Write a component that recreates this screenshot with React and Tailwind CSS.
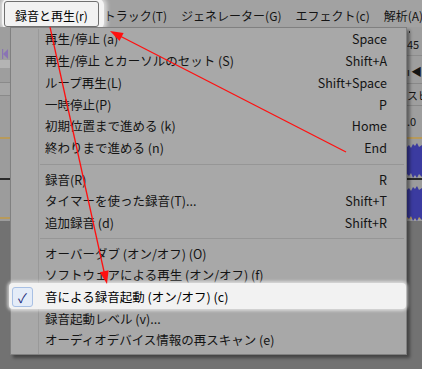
import React from "react";

const g1 = [
  ["再生/停止 (a)", "Space"],
  ["再生/停止 とカーソルのセット (S)", "Shift+A"],
  ["ループ再生(L)", "Shift+Space"],
  ["一時停止(P)", "P"],
  ["初期位置まで進める (k)", "Home"],
  ["終わりまで進める (n)", "End"],
];
const g2 = [
  ["録音(R)", "R"],
  ["タイマーを使った録音(T)...", "Shift+T"],
  ["追加録音 (d)", "Shift+R"],
];
const g3 = [
  ["オーバーダブ (オン/オフ) (O)", ""],
  ["ソフトウェアによる再生 (オン/オフ) (f)", ""],
  ["音による録音起動 (オン/オフ) (c)", "", true],
  ["録音起動レベル (v)...", ""],
  ["オーディオデバイス情報の再スキャン (e)", ""],
];

function Row({ label, sc, checked }) {
  if (checked) {
    return (
      <div className="relative flex h-[21.7px] items-center">
        <div className="absolute -left-[2px] right-0 -top-[4px] -bottom-[1px] rounded-[4px] bg-[#f2f2f2] shadow-[0_0_3px_2px_rgba(255,255,255,0.55)]" />
        <div className="relative z-10 flex h-full w-[28px] items-center pl-[1px]">
          <div className="flex h-[20px] w-[21px] items-center justify-center rounded-[3px] border border-[#a8c0e4] bg-[#e4ecf8] text-[13px] leading-none text-[#1b2a78]">
            ✓
          </div>
        </div>
        <div className="relative z-10 flex-1 whitespace-nowrap pl-[6px] text-black">{label}</div>
      </div>
    );
  }
  return (
    <div className="flex h-[21.7px] items-center">
      <div className="h-full w-[28px] border-r border-[#999999]" />
      <div className="flex-1 whitespace-nowrap pl-[6px]">{label}</div>
      <div className="whitespace-nowrap pr-[19px]">{sc}</div>
    </div>
  );
}

function Sep({ h }) {
  return (
    <div className={`flex ${h}`}>
      <div className="h-full w-[28px] border-r border-[#999999]" />
      <div className="flex flex-1 items-center pl-[1px] pr-[2px]">
        <div className="h-px w-full bg-[#969696]" />
      </div>
    </div>
  );
}

function Wave() {
  return (
    <svg width="15" height="36" viewBox="0 0 15 36">
      <path
        d="M0 4 L2 2 L4 5 L6 1 L8 3 L10 0 L12 4 L15 2 L15 34 L12 31 L10 35 L8 32 L6 35 L4 30 L2 33 L0 31 Z"
        fill="#3b3ba0"
      />
    </svg>
  );
}

export default function App() {
  return (
    <div className="relative h-[369px] w-[422px] overflow-hidden bg-[#727272] font-['Noto_Sans_CJK_JP','Noto_Sans',sans-serif] text-[12.5px] text-[#141414]">
      {/* menubar */}
      <div className="flex h-[27px] items-center overflow-hidden whitespace-nowrap bg-[#a2a2a2] pl-[8px] pt-[4px] text-[12px]">
        <div className="relative shrink-0 px-[7px]">
          <div className="absolute -left-[6px] -right-[9px] -top-[8px] -bottom-[4px] rounded-[6px] bg-[#f4f4f4] shadow-[0_0_4px_3px_rgba(255,255,255,0.6)]" />
          <div className="absolute -left-[4px] -right-[4px] -top-[6px] -bottom-[2px] rounded-[3px] border border-[#707070] bg-[#f2f2f2]" />
          <span className="relative text-black">録音と再生(r)</span>
        </div>
        <div className="ml-[2px] shrink-0 px-[7px]">トラック(T)</div>
        <div className="shrink-0 px-[7px]">ジェネレーター(G)</div>
        <div className="shrink-0 px-[7px]">エフェクト(c)</div>
        <div className="shrink-0 px-[7px]">解析(A)</div>
      </div>

      {/* background app */}
      <div className="flex h-[110px] justify-between bg-[#9e9e9e]">
        <div className="flex w-[10px] flex-col">
          <div className="h-[21px]" />
          <svg width="10" height="12" viewBox="0 0 10 12">
            <path d="M8 1 L3 6 L8 11 Z" fill="#8a74b4" />
            <rect x="2" y="1" width="1.2" height="10" fill="#8a74b4" />
          </svg>
          <div className="h-[8px] bg-[#b4b4b4]" />
          <div className="mt-[14px] h-[14px] border-y border-[#8a8a8a] bg-[#a6a6a6]" />
        </div>
        <div className="flex w-[15px] flex-col overflow-hidden whitespace-nowrap text-[11px] leading-none">
          <div className="ml-[2px] mt-[4px] h-[2px] w-[1px] bg-[#333]" />
          <div className="mt-[6px]">45</div>
          <div className="mt-[5px] h-px bg-[#8c8c8c]" />
          <div className="mt-[10px] flex justify-between">
            <span>ı</span>
            <span>◀</span>
          </div>
          <div className="mt-[6px] h-px bg-[#888888]" />
          <div className="mt-[6px]">スピ</div>
          <div className="mt-[4px] h-px bg-[#888888]" />
          <div className="mt-[10px]">.0</div>
        </div>
      </div>
      <div className="flex h-[84px] flex-col border-t-2 border-[#b89a5a] bg-[#9c9c9c]">
        <div className="flex h-[41px] justify-end border-b-2 border-[#2a2a2a] pt-[4px]">
          <Wave />
        </div>
        <div className="flex h-[39px] justify-end border-b-2 border-[#b89a5a] pt-[6px]">
          <Wave />
        </div>
      </div>

      {/* dropdown menu */}
      <div className="absolute left-[10px] top-[27px] flex h-[328px] w-[397px] flex-col border border-[#808080] bg-[#a8a8a8] pt-px shadow-[3px_3px_3px_rgba(0,0,0,0.4)]">
        {g1.map(([l, s]) => (
          <Row key={l} label={l} sc={s} />
        ))}
        <Sep h="h-[10px]" />
        {g2.map(([l, s]) => (
          <Row key={l} label={l} sc={s} />
        ))}
        <Sep h="h-[9px]" />
        {g3.map(([l, s, c]) => (
          <Row key={l} label={l} sc={s} checked={c} />
        ))}
        <div className="flex flex-1">
          <div className="h-full w-[28px] border-r border-[#999999]" />
        </div>
      </div>

      {/* red arrows */}
      <svg className="pointer-events-none absolute left-0 top-0" width="422" height="369" viewBox="0 0 422 369">
        <line x1="346" y1="152" x2="118" y2="35" stroke="#ff1010" strokeWidth="1.3" />
        <polygon points="110,31 123.6,32.9 119.5,40.9" fill="#ff1010" />
        <line x1="50" y1="27" x2="105" y2="276" stroke="#ff1010" strokeWidth="1.3" />
        <polygon points="107,284 99.8,272.3 108.6,270.3" fill="#ff1010" />
      </svg>
    </div>
  );
}
